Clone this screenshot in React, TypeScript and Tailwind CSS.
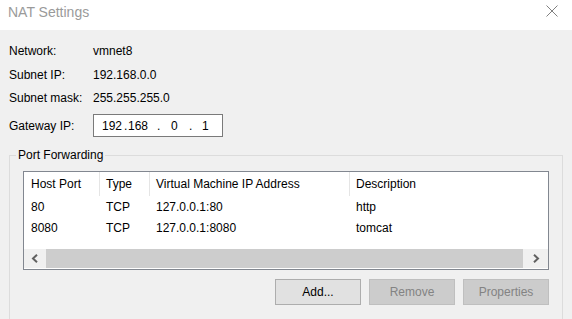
import type { ReactNode } from "react"

type Forward = {
  port: string
  type: string
  address: string
  description: string
}

const forwards: Forward[] = [
  { port: "80", type: "TCP", address: "127.0.0.1:80", description: "http" },
  { port: "8080", type: "TCP", address: "127.0.0.1:8080", description: "tomcat" },
]

const cols = "grid grid-cols-[76px_50px_200px_1fr]"

function InfoRow({ label, value, className }: { label: string; value: ReactNode; className: string }) {
  return (
    <div className={`flex items-center ${className}`}>
      <span className="w-[84px] shrink-0">{label}</span>
      <span>{value}</span>
    </div>
  )
}

function Chevron({ dir }: { dir: "left" | "right" }) {
  return (
    <svg width="8" height="9" viewBox="0 0 8 9" className="text-[#606060]">
      <polyline
        points={dir === "left" ? "6,0.8 2,4.5 6,8.2" : "2,0.8 6,4.5 2,8.2"}
        fill="none"
        stroke="currentColor"
        strokeWidth="2"
      />
    </svg>
  )
}

function Button({ label, disabled }: { label: string; disabled?: boolean }) {
  return (
    <button
      className={
        disabled
          ? "h-[26px] w-[86px] border border-[#bfbfbf] bg-[#cccccc] text-[#838383]"
          : "h-[26px] w-[86px] border border-[#adadad] bg-[#e1e1e1] text-black"
      }
    >
      {label}
    </button>
  )
}

export default function App() {
  return (
    <div className="h-[319px] w-[572px] overflow-hidden bg-[#f0f0f0] text-[12px] text-black [font-family:'Liberation_Sans',Arial,sans-serif]">
      {/* title bar */}
      <div className="flex h-[30px] items-start justify-between bg-white pl-[8px] pr-[14px]">
        <span className="pt-[4px] text-[14px] leading-[16px] text-[#9a9a9a]">NAT Settings</span>
        <svg width="12" height="12" viewBox="0 0 12 12" className="mt-[5px]">
          <path d="M0.5 0.5 L11.5 11.5 M11.5 0.5 L0.5 11.5" stroke="#808080" strokeWidth="1" />
        </svg>
      </div>

      <div className="pl-[9px] pt-[8px]">
        <InfoRow label="Network:" value="vmnet8" className="h-[25px]" />
        <InfoRow label="Subnet IP:" value="192.168.0.0" className="h-[24px]" />
        <InfoRow label="Subnet mask:" value="255.255.255.0" className="h-[21px]" />

        <div className="mt-[6px] flex items-center">
          <span className="w-[84px] shrink-0">Gateway IP:</span>
          <div className="flex h-[23px] w-[130px] items-center border border-[#7a7a7a] bg-white pl-[8px]">
            <span className="w-[22px]">192</span>
            <span className="w-[4px]">.</span>
            <span className="w-[29px]">168</span>
            <span className="w-[14px]">.</span>
            <span className="w-[18px]">0</span>
            <span className="w-[13px]">.</span>
            <span>1</span>
          </div>
        </div>
      </div>

      <fieldset className="ml-[9px] mt-[11px] h-[200px] w-[554px] border border-[#dcdcdc] pl-[13px]">
        <legend className="-ml-[7px] px-[2px] leading-[14px]">Port Forwarding</legend>

        <div className="mt-[9px] flex h-[99px] w-[526px] flex-col border border-[#828790] bg-white">
          <div className={`${cols} h-[24px] shrink-0`}>
            <div className="flex items-center border-r border-[#e5e5e5] pl-[7px]">Host Port</div>
            <div className="flex items-center border-r border-[#e5e5e5] pl-[6px]">Type</div>
            <div className="flex items-center border-r border-[#e5e5e5] pl-[6px]">Virtual Machine IP Address</div>
            <div className="flex items-center pl-[6px]">Description</div>
          </div>
          <div className="flex-1">
            {forwards.map((f) => (
              <div key={f.port} className={`${cols} h-[21px] items-center`}>
                <span className="pl-[7px]">{f.port}</span>
                <span className="pl-[6px]">{f.type}</span>
                <span className="pl-[6px]">{f.address}</span>
                <span className="pl-[6px]">{f.description}</span>
              </div>
            ))}
          </div>
          <div className="mb-[1px] flex h-[19px] shrink-0 bg-[#f0f0f0]">
            <div className="flex w-[22px] items-center justify-center">
              <Chevron dir="left" />
            </div>
            <div className="w-[477px] bg-[#cdcdcd]" />
            <div className="flex flex-1 items-center justify-center">
              <Chevron dir="right" />
            </div>
          </div>
        </div>

        <div className="mt-[9px] flex w-[526px] justify-end gap-[8px]">
          <Button label="Add..." />
          <Button label="Remove" disabled />
          <Button label="Properties" disabled />
        </div>
      </fieldset>
    </div>
  )
}
